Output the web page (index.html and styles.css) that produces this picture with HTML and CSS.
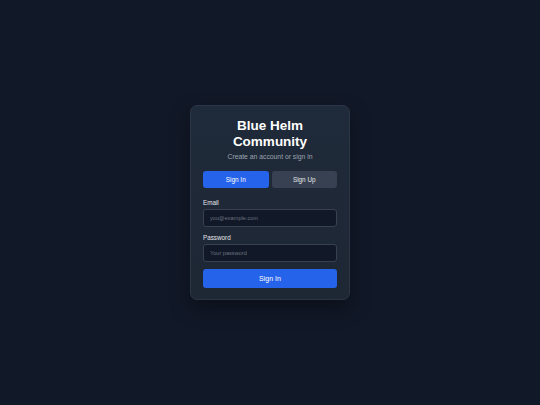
FILE: index.html
```html
<!DOCTYPE html>
<html>
<head>
<meta charset="utf-8">
<link rel="stylesheet" href="styles.css">
</head>
<body>
<main class="page">
  <section class="card">
    <h1 class="title">Blue Helm Community</h1>
    <p class="subtitle">Create an account or sign in</p>
    <div class="tabs">
      <button class="tab active">Sign In</button>
      <button class="tab">Sign Up</button>
    </div>
    <form class="form">
      <label class="label" for="email">Email</label>
      <input class="input" id="email" type="email" placeholder="you@example.com">
      <label class="label label-gap" for="pw">Password</label>
      <input class="input" id="pw" type="password" placeholder="Your password">
      <button type="button" class="submit">Sign In</button>
    </form>
  </section>
</main>
</body>
</html>
```
FILE: styles.css
```css
* { box-sizing: border-box; }
html, body { margin: 0; height: 100%; }
body {
  background: #111827;
  font-family: "Liberation Sans", Arial, sans-serif;
  color: #f9fafb;
}
.page {
  height: 405px;
  display: flex;
  align-items: center;
  justify-content: center;
}
.card {
  width: 160px;
  margin-top: 0;
  padding: 12px 12px 11px 12px;
  background: linear-gradient(180deg, #1f2a3a 0%, #1e2734 100%);
  border: 1px solid #2b3545;
  border-radius: 7px;
  box-shadow: 0 8px 20px rgba(0, 0, 0, 0.35);
}
.title {
  margin: 0;
  text-align: center;
  font-size: 13.5px;
  line-height: 16px;
  font-weight: 700;
  color: #ffffff;
}
.subtitle {
  margin: 2px 0 0;
  text-align: center;
  font-size: 6.8px;
  line-height: 10px;
  color: #9ca3af;
}
.tabs {
  display: flex;
  gap: 3px;
  margin-top: 9px;
}
.tab {
  flex: 1;
  height: 17px;
  border: 0;
  border-radius: 3px;
  background: #374151;
  color: #e5e7eb;
  font-family: inherit;
  font-size: 6.4px;
  padding: 0;
}
.tab.active {
  background: #2563eb;
  color: #ffffff;
}
.form {
  display: flex;
  flex-direction: column;
  margin-top: 10px;
}
.label {
  font-size: 6.3px;
  line-height: 9px;
  color: #e5e7eb;
}
.label-gap { margin-top: 6px; }
.input {
  margin-top: 2px;
  height: 18px;
  padding: 0 6px;
  background: #111827;
  border: 1px solid #374151;
  border-radius: 3px;
  color: #e5e7eb;
  font-family: inherit;
  font-size: 5.6px;
  outline: none;
}
.input::placeholder { color: #6b7280; }
.submit {
  margin-top: 7px;
  height: 19px;
  border: 0;
  border-radius: 3px;
  background: #2563eb;
  color: #ffffff;
  font-family: inherit;
  font-size: 7px;
  padding: 0;
}
```
